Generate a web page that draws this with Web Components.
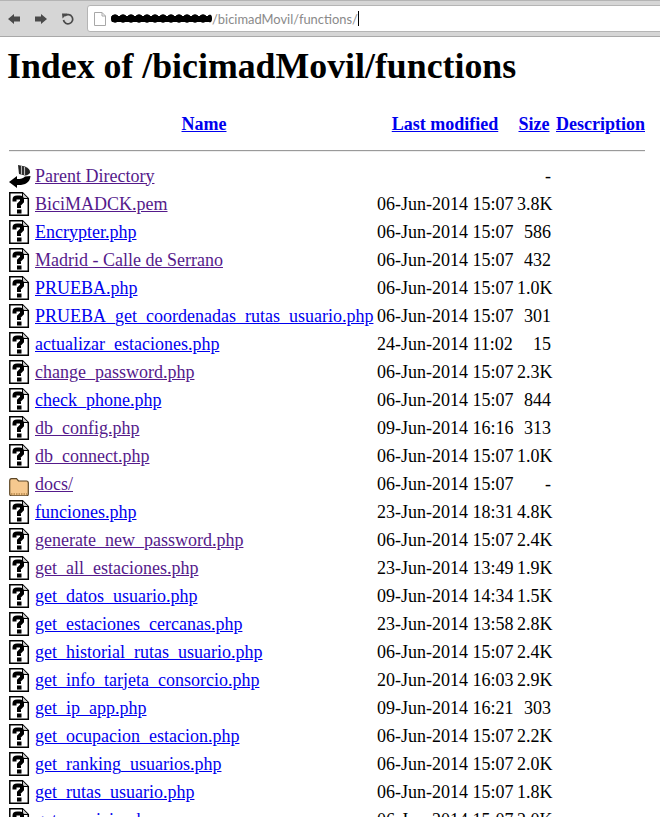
<!DOCTYPE html>
<html>
<head>
<meta charset="utf-8">
<title>Index of /bicimadMovil/functions</title>
<style>
  html, body { margin: 0; height: 817px; overflow: hidden; background: #fff; }
</style>
</head>
<body>
<browser-bar path="/bicimadMovil/functions/"></browser-bar>
<dir-index title="Index of /bicimadMovil/functions"></dir-index>

<script>
const files = [
  ['back', 'Parent Directory', '', '-', 1],
  ['unknown', 'BiciMADCK.pem', '06-Jun-2014 15:07', '3.8K', 1],
  ['unknown', 'Encrypter.php', '06-Jun-2014 15:07', '586', 0],
  ['unknown', 'Madrid - Calle de Serrano', '06-Jun-2014 15:07', '432', 1],
  ['unknown', 'PRUEBA.php', '06-Jun-2014 15:07', '1.0K', 0],
  ['unknown', 'PRUEBA_get_coordenadas_rutas_usuario.php', '06-Jun-2014 15:07', '301', 0],
  ['unknown', 'actualizar_estaciones.php', '24-Jun-2014 11:02', '15', 0],
  ['unknown', 'change_password.php', '06-Jun-2014 15:07', '2.3K', 1],
  ['unknown', 'check_phone.php', '06-Jun-2014 15:07', '844', 0],
  ['unknown', 'db_config.php', '09-Jun-2014 16:16', '313', 1],
  ['unknown', 'db_connect.php', '06-Jun-2014 15:07', '1.0K', 1],
  ['folder', 'docs/', '06-Jun-2014 15:07', '-', 1],
  ['unknown', 'funciones.php', '23-Jun-2014 18:31', '4.8K', 0],
  ['unknown', 'generate_new_password.php', '06-Jun-2014 15:07', '2.4K', 1],
  ['unknown', 'get_all_estaciones.php', '23-Jun-2014 13:49', '1.9K', 1],
  ['unknown', 'get_datos_usuario.php', '09-Jun-2014 14:34', '1.5K', 0],
  ['unknown', 'get_estaciones_cercanas.php', '23-Jun-2014 13:58', '2.8K', 0],
  ['unknown', 'get_historial_rutas_usuario.php', '06-Jun-2014 15:07', '2.4K', 0],
  ['unknown', 'get_info_tarjeta_consorcio.php', '20-Jun-2014 16:03', '2.9K', 0],
  ['unknown', 'get_ip_app.php', '09-Jun-2014 16:21', '303', 0],
  ['unknown', 'get_ocupacion_estacion.php', '06-Jun-2014 15:07', '2.2K', 0],
  ['unknown', 'get_ranking_usuarios.php', '06-Jun-2014 15:07', '2.0K', 0],
  ['unknown', 'get_rutas_usuario.php', '06-Jun-2014 15:07', '1.8K', 0],
  ['unknown', 'get_servicio.php', '06-Jun-2014 15:07', '2.0K', 0],
];

// barra del navegador
class BrowserBar extends HTMLElement {
  constructor() {
    super();
    this.attachShadow({ mode: 'open' });
    this.shadowRoot.innerHTML = `
<style>
  :host { display: flex; align-items: center; height: 37px; box-sizing: border-box; background: #d6d6d6; border-top: 1px solid #b4b4b4; border-bottom: 1px solid #a9a9a9; font-family: Lato, sans-serif; }
  .btns { display: flex; align-items: center; gap: 15px; width: 87px; box-sizing: border-box; padding-left: 8px; }
  svg { display: block; }
  .url { flex: 1; display: flex; align-items: center; height: 27px; box-sizing: border-box; margin-right: -4px; background: #fff; border: 1px solid #b5b5b5; border-radius: 3px; padding-left: 6px; }
  .mask { width: 101px; height: 9px; margin-left: 5px; border-radius: 4px; background: radial-gradient(circle at 4px 4.500px, #000 3.800px, transparent 4.500px) 0 0 / 8px 9px repeat-x, linear-gradient(#000, #000) 0 1.500px / 100% 6px no-repeat; }
  .path { font-size: 12.900px; color: #8a8a8a; }
  .caret { width: 1px; height: 15px; background: #000; }
</style>
<div class="btns">
  <svg width="12" height="10" viewBox="0 0 12 10"><path d="M0 5 6 0V2.500H12V7.500H6V10Z" fill="#4a4a4a"/></svg>
  <svg width="12" height="10" viewBox="0 0 12 10"><path d="M12 5 6 0V2.500H0V7.500H6V10Z" fill="#4a4a4a"/></svg>
  <svg width="12" height="12" viewBox="0 0 12 12"><path d="M3 2.800A4.600 4.600 0 1 1 1.500 7" fill="none" stroke="#4a4a4a" stroke-width="1.700"/><path d="M0 .5 5.500 .5 .5 5.500Z" fill="#4a4a4a"/></svg>
</div>
<div class="url">
  <svg width="12" height="14" viewBox="0 0 12 14"><path d="M.5.500H8L11.500 4V13.500H.5Z M8 .5V4H11.500" fill="#fff" stroke="#a8a8a8"/></svg>
  <div class="mask"></div>
  <span class="path">${this.getAttribute('path')}</span><span class="caret"></span>
</div>`;
  }
}
customElements.define('browser-bar', BrowserBar);

// iconos de Apache
class FileIcon extends HTMLElement {
  constructor() {
    super();
    this.attachShadow({ mode: 'open' });
    const kind = this.getAttribute('kind');
    let art = '';
    if (kind === 'unknown') {
      art = `<path d="M.8 .8H13.500L19.300 6.500V23.200H.8Z" fill="#fff" stroke="#000" stroke-width="1.500"/>
        <path d="M13.500 1V6.500H19" fill="#ccc" stroke="#000"/>
        <path d="M5.500 9.500V7.500Q5.500 5.500 8 5.500H10.500Q13 5.500 13 7.500V9.500L10 12.500V16" fill="none" stroke="#000" stroke-width="4"/>
        <rect x="8" y="17.500" width="4.500" height="4" fill="#000"/>`;
    } else if (kind === 'folder') {
      art = `<path d="M.7 9Q.7 6.700 2.500 6.700H7.500L9.500 9H17.500Q19.300 9 19.300 11V22Q19.300 23.800 17.500 23.800H2.500Q.7 23.800 .7 22Z" fill="#f6c98f" stroke="#5c4626" stroke-width="1.200"/>
        <path d="M2 22H18" stroke="#b5864a" stroke-width="1.500" stroke-dasharray="1.500 1"/>`;
    } else {
      art = `<path d="M0 18 8 12V15C12 15 14 14.500 16 12.500L21.500 12C21 19 15 21.500 8 21V24Z" fill="#000"/>
        <path d="M9 1 16 2.500Q21.500 5 21 8.500Q20 11 16 11.500L10 10Z" fill="#222"/>
        <path d="M12.500 2V10.500M15.500 3V11" stroke="#bbb" stroke-width="1.200"/>`;
    }
    this.shadowRoot.innerHTML = `
<style>:host { display: block; width: 22px; height: 24px; } svg { display: block; }</style>
<svg width="22" height="24" viewBox="0 0 22 24">${art}</svg>`;
  }
}
customElements.define('file-icon', FileIcon);

class DirRow extends HTMLElement {
  constructor() {
    super();
    this.attachShadow({ mode: 'open' });
    const g = (n) => this.getAttribute(n) || '';
    const color = this.hasAttribute('visited') ? '#551a8b' : '#0000ee';
    this.shadowRoot.innerHTML = `
<style>
  :host { display: grid; grid-template-columns: subgrid; grid-column: 1 / -1; align-items: center; height: 28px; }
  a { color: ${color}; text-decoration: underline; white-space: nowrap; }
  .size { text-align: right; white-space: nowrap; }
  .date { white-space: nowrap; }
</style>
<file-icon kind="${g('kind')}"></file-icon>
<span><a href="#">${g('name')}</a></span>
<span class="date">${g('date')}</span>
<span class="size">${g('size')}</span>
<span></span>`;
  }
}
customElements.define('dir-row', DirRow);

class DirIndex extends HTMLElement {
  constructor() {
    super();
    this.attachShadow({ mode: 'open' });
    const rows = files.map(f => `<dir-row kind="${f[0]}" name="${f[1]}" date="${f[2]}" size="${f[3]}"${f[4] ? ' visited' : ''}></dir-row>`).join('');
    this.shadowRoot.innerHTML = `
<style>
  :host { display: block; padding: 0 15px 0 7px; font-family: "Liberation Serif", serif; font-size: 18px; color: #000; }
  h1 { margin: 0; font-size: 35.800px; font-weight: bold; line-height: 41px; padding-top: 9px; }
  .table { display: grid; grid-template-columns: 22px 338px 136px 34px 90px; column-gap: 4px; margin-top: 27px; margin-left: 2px; }
  .head { display: contents; font-weight: bold; }
  .head a { color: #0000ee; text-align: center; white-space: nowrap; }
  .head a:last-child { padding-left: 1px; }
  hr { grid-column: 1 / -1; margin: 15px 0 11px 0; height: 1px; border: 0; background: #9a9a9a; box-shadow: 0 1px 0 #eee; }
</style>
<h1>${this.getAttribute('title')}</h1>
<div class="table">
  <div class="head"><span></span><a href="#">Name</a><a href="#">Last modified</a><a href="#">Size</a><a href="#">Description</a></div>
  <hr>
  ${rows}
</div>`;
  }
}
customElements.define('dir-index', DirIndex);
</script>
</body>
</html>
